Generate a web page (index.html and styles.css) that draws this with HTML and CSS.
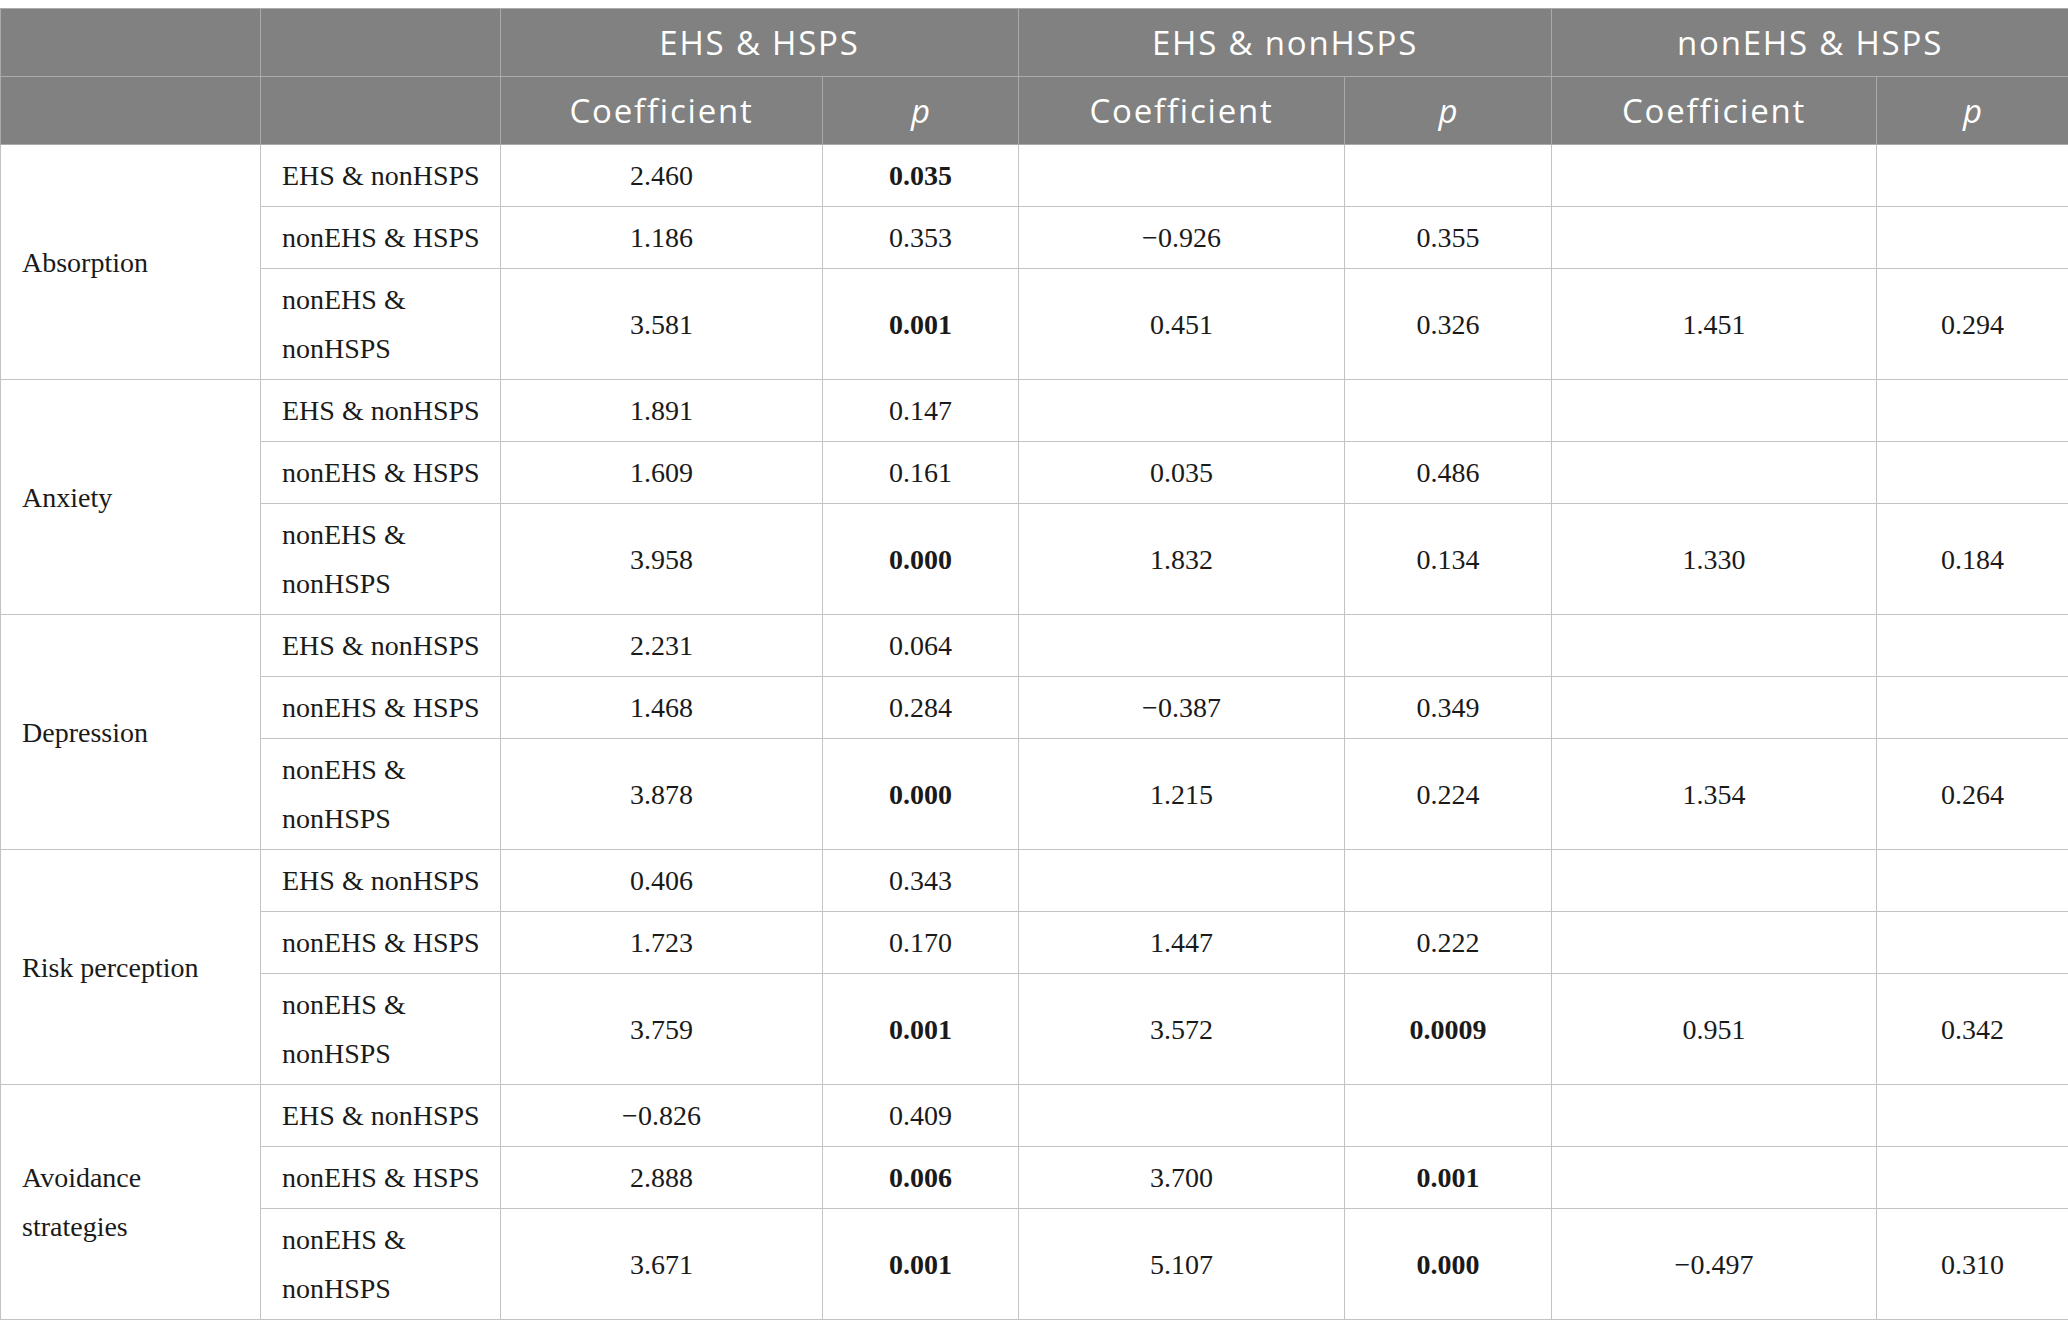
FILE: index.html
```html
<!DOCTYPE html>
<html lang="en">
<head>
    <meta charset="UTF-8">
    <meta name="viewport" content="width=device-width, initial-scale=1.0">
    <title>Post-hoc comparisons</title>
    <link rel="stylesheet" href="styles.css">
</head>
<body>

    <table class="results">
        <colgroup>
            <col class="c-scale">
            <col class="c-group">
            <col class="c-coef1">
            <col class="c-p1">
            <col class="c-coef2">
            <col class="c-p2">
            <col class="c-coef3">
            <col class="c-p3">
        </colgroup>
        <thead>
            <tr>
                <th></th>
                <th></th>
                <th colspan="2">EHS &amp; HSPS</th>
                <th colspan="2">EHS &amp; nonHSPS</th>
                <th colspan="2">nonEHS &amp; HSPS</th>
            </tr>
            <tr>
                <th></th>
                <th></th>
                <th>Coefficient</th>
                <th><i>p</i></th>
                <th>Coefficient</th>
                <th><i>p</i></th>
                <th>Coefficient</th>
                <th><i>p</i></th>
            </tr>
        </thead>
        <tbody>
            <!-- Absorption -->
            <tr>
                <td class="scale" rowspan="3">Absorption</td>
                <td class="group">EHS &amp; nonHSPS</td>
                <td>2.460</td><td><b>0.035</b></td>
                <td></td><td></td><td></td><td></td>
            </tr>
            <tr>
                <td class="group">nonEHS &amp; HSPS</td>
                <td>1.186</td><td>0.353</td>
                <td>−0.926</td><td>0.355</td>
                <td></td><td></td>
            </tr>
            <tr>
                <td class="group">nonEHS &amp; nonHSPS</td>
                <td>3.581</td><td><b>0.001</b></td>
                <td>0.451</td><td>0.326</td>
                <td>1.451</td><td>0.294</td>
            </tr>

            <!-- Anxiety -->
            <tr>
                <td class="scale" rowspan="3">Anxiety</td>
                <td class="group">EHS &amp; nonHSPS</td>
                <td>1.891</td><td>0.147</td>
                <td></td><td></td><td></td><td></td>
            </tr>
            <tr>
                <td class="group">nonEHS &amp; HSPS</td>
                <td>1.609</td><td>0.161</td>
                <td>0.035</td><td>0.486</td>
                <td></td><td></td>
            </tr>
            <tr>
                <td class="group">nonEHS &amp; nonHSPS</td>
                <td>3.958</td><td><b>0.000</b></td>
                <td>1.832</td><td>0.134</td>
                <td>1.330</td><td>0.184</td>
            </tr>

            <!-- Depression -->
            <tr>
                <td class="scale" rowspan="3">Depression</td>
                <td class="group">EHS &amp; nonHSPS</td>
                <td>2.231</td><td>0.064</td>
                <td></td><td></td><td></td><td></td>
            </tr>
            <tr>
                <td class="group">nonEHS &amp; HSPS</td>
                <td>1.468</td><td>0.284</td>
                <td>−0.387</td><td>0.349</td>
                <td></td><td></td>
            </tr>
            <tr>
                <td class="group">nonEHS &amp; nonHSPS</td>
                <td>3.878</td><td><b>0.000</b></td>
                <td>1.215</td><td>0.224</td>
                <td>1.354</td><td>0.264</td>
            </tr>

            <!-- Risk perception -->
            <tr>
                <td class="scale" rowspan="3">Risk perception</td>
                <td class="group">EHS &amp; nonHSPS</td>
                <td>0.406</td><td>0.343</td>
                <td></td><td></td><td></td><td></td>
            </tr>
            <tr>
                <td class="group">nonEHS &amp; HSPS</td>
                <td>1.723</td><td>0.170</td>
                <td>1.447</td><td>0.222</td>
                <td></td><td></td>
            </tr>
            <tr>
                <td class="group">nonEHS &amp; nonHSPS</td>
                <td>3.759</td><td><b>0.001</b></td>
                <td>3.572</td><td><b>0.0009</b></td>
                <td>0.951</td><td>0.342</td>
            </tr>

            <!-- Avoidance strategies -->
            <tr>
                <td class="scale" rowspan="3">Avoidance strategies</td>
                <td class="group">EHS &amp; nonHSPS</td>
                <td>−0.826</td><td>0.409</td>
                <td></td><td></td><td></td><td></td>
            </tr>
            <tr>
                <td class="group">nonEHS &amp; HSPS</td>
                <td>2.888</td><td><b>0.006</b></td>
                <td>3.700</td><td><b>0.001</b></td>
                <td></td><td></td>
            </tr>
            <tr>
                <td class="group">nonEHS &amp; nonHSPS</td>
                <td>3.671</td><td><b>0.001</b></td>
                <td>5.107</td><td><b>0.000</b></td>
                <td>−0.497</td><td>0.310</td>
            </tr>
        </tbody>
    </table>

</body>
</html>
```

FILE: styles.css
```css
/* Page */
body {
    margin: 0;
    padding: 8px 0 0 0;
    background: #FFFFFF;
    color: #1a1a1a;
}

/* Table */
.results {
    width: 2068px;
    table-layout: fixed;
    border-collapse: collapse;
    font-family: "Liberation Serif", "Times New Roman", serif;
    font-size: 28px;
}

/* Column widths - taken from the printed table */
.c-scale { width: 260px; }
.c-group { width: 240px; }
.c-coef1 { width: 322px; }
.c-p1    { width: 196px; }
.c-coef2 { width: 326px; }
.c-p2    { width: 207px; }
.c-coef3 { width: 325px; }
.c-p3    { width: 192px; }

/* Header rows */
.results th {
    height: 67px;
    padding: 0;
    background-color: #808180;
    color: #FFFFFF;
    font-family: "Open Sans", "DejaVu Sans", sans-serif;
    font-weight: 400;
    font-size: 33px;
    letter-spacing: 1.8px;
    text-align: center;
    vertical-align: middle;
    border: 1px solid #a9aaa9;
}

.results th i {
    letter-spacing: 0;
}

/* Body cells */
.results td {
    padding: 6px 0;
    line-height: 49px;
    text-align: center;
    vertical-align: middle;
    border: 1px solid #c3c3c3;
}

.results td b {
    font-weight: 700;
}

.results td.scale,
.results td.group {
    text-align: left;
    padding-left: 21px;
    padding-right: 12px;
}
```
